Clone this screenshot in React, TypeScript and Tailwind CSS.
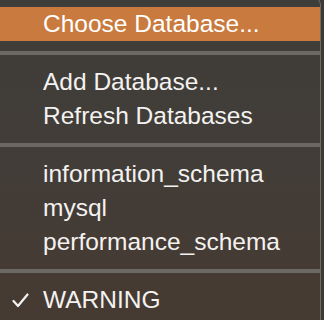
import type { ReactNode } from 'react'

function Item({ children, active, checked }: { children: ReactNode; active?: boolean; checked?: boolean }) {
  return (
    <div
      className={
        'relative flex h-[34px] items-center pl-[43px] text-[24.5px] leading-none ' +
        (active ? 'bg-[#c97a3e] text-white' : 'text-[#f4f2f0]')
      }
    >
      {checked && (
        <svg className="absolute left-[12px] top-[10px]" width="17" height="15" viewBox="0 0 17 15" fill="none">
          <path d="M1.5 8 L6 13 L15.5 1.5" stroke="#f4f2f0" strokeWidth="2.2" strokeLinecap="round" strokeLinejoin="round" />
        </svg>
      )}
      {children}
    </div>
  )
}

function Separator() {
  return <div className="my-[10px] h-[4px] bg-[#6c6864]" />
}

export default function App() {
  return (
    <div className="h-[320px] w-[324px] overflow-hidden bg-[#3b3835]" style={{ fontFamily: '"Liberation Sans", Arial, sans-serif' }}>
      <div className="-mt-[3px] h-[330px] w-[321px] rounded-tr-[8px] border-r border-t border-[#6f6a65] bg-gradient-to-b from-[#3f3d3a] via-[#423d38] to-[#463a31] pt-[9px]">
        <Item active>Choose Database...</Item>
        <Separator />
        <Item>Add Database...</Item>
        <Item>Refresh Databases</Item>
        <Separator />
        <Item>information_schema</Item>
        <Item>mysql</Item>
        <Item>performance_schema</Item>
        <Separator />
        <Item checked>WARNING</Item>
      </div>
    </div>
  )
}
